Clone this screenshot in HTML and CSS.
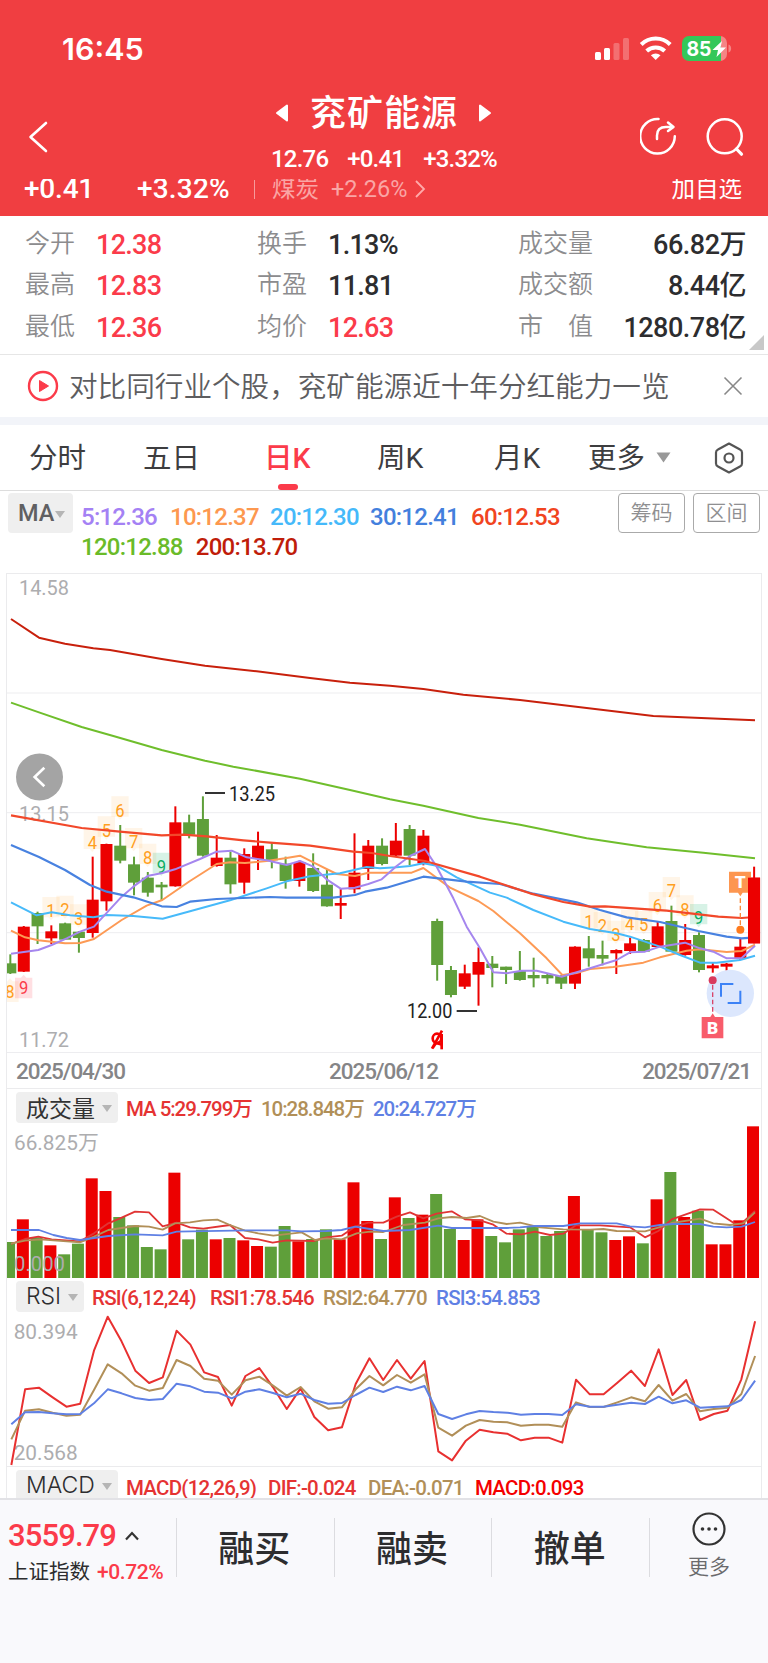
FILE: index.html
```html
<!DOCTYPE html>
<html lang="zh-CN">
<head>
<meta charset="utf-8">
<title>兖矿能源</title>
<link rel="stylesheet" href="styles.css">
</head>
<body>
<header class="header">
  <div class="status">
    <span class="clock">16:45</span>
    <svg class="status-icons" width="140" height="28" viewBox="0 0 140 28">
      <g fill="#fff">
        <rect x="0" y="17" width="6" height="8" rx="1.500"/><rect x="9" y="13" width="6" height="12" rx="1.500"/>
        <g opacity=".25"><rect x="18.500" y="8" width="6" height="17" rx="1.500"/><rect x="28" y="3" width="6" height="22" rx="1.500"/></g>
      </g>
      <g fill="none" stroke="#fff" stroke-width="4"><path d="M46.200 9.500a20.500 20.500 0 0 1 29 0"/><path d="M51.700 16a13 13 0 0 1 18 0"/></g>
      <path d="M60.700 25l-4.800-4.800a7.500 7.500 0 0 1 9.600 0z" fill="#fff"/>
      <path d="M94 1h31a7 7 0 0 1 7 7v11a7 7 0 0 1-7 7H94z" fill="#f58585"/>
      <path d="M94 1h32v25H94a7 7 0 0 1-7-7V8a7 7 0 0 1 7-7z" fill="#34c759"/>
      <path d="M133.500 9.500c3.500 1 3.500 7 0 8z" fill="#f58585"/>
      <text x="91.500" y="21" textLength="25" lengthAdjust="spacingAndGlyphs" class="battery">85</text>
      <path d="M127 6l-9.500 9h5.500l-1.500 7 9.500-9.500h-5.500z" fill="#fff"/>
    </svg>
  </div>
  <div class="nav">
    <svg class="back" width="20" height="32" viewBox="0 0 20 32"><path d="M18 2L2.500 16 18 30" fill="none" stroke="#fff" stroke-width="2.600" stroke-linecap="round" stroke-linejoin="round"/></svg>
    <div class="title">
      <div class="name-row">
        <svg width="14" height="18" viewBox="0 0 14 18"><path d="M12 1.500v15L2 9z" fill="#fff" stroke="#fff" stroke-width="2" stroke-linejoin="round"/></svg>
        <h1>兖矿能源</h1>
        <svg width="14" height="18" viewBox="0 0 14 18"><path d="M2 1.500v15L12 9z" fill="#fff" stroke="#fff" stroke-width="2" stroke-linejoin="round"/></svg>
      </div>
      <div class="mini"><span>12.76</span><span>+0.41</span><span>+3.32%</span></div>
    </div>
    <svg class="tools" width="108" height="42" viewBox="0 0 108 42" fill="none" stroke="#fff" stroke-width="2.500" stroke-linecap="round" stroke-linejoin="round">
      <path d="M18.500 2A17.300 17.300 0 1 0 34.800 19.300"/><path d="M17 22v-3.500c0-6 3.500-8.500 9-8.500h7M28 5.500l5.500 4.500-5.500 4"/>
      <circle cx="84.700" cy="19.300" r="17"/><path d="M96.500 32l5 5.200" stroke-width="3.200"/>
    </svg>
  </div>
  <div class="ticker">
    <div class="ticker-row">
      <span class="t-chg">+0.41</span><span class="t-pct">+3.32%</span><i></i><span class="t-sec">煤炭</span><span class="t-secp">+2.26%</span>
      <svg width="12" height="20" viewBox="0 0 12 20"><path d="M2 2l8 8-8 8" fill="none" stroke="#faa" stroke-width="1.800"/></svg>
      <span class="t-add">加自选</span>
    </div>
  </div>
</header>

<section class="quote">
  <span class="l">今开</span><b class="up">12.38</b><span class="l">换手</span><b>1.13%</b><span class="l">成交量</span><b class="r">66.82万</b>
  <span class="l">最高</span><b class="up">12.83</b><span class="l">市盈</span><b>11.81</b><span class="l">成交额</span><b class="r">8.44亿</b>
  <span class="l">最低</span><b class="up">12.36</b><span class="l">均价</span><b class="up">12.63</b><span class="l">市　值</span><b class="r">1280.78亿</b>
  <svg class="corner" width="15" height="15" viewBox="0 0 15 15"><path d="M15 0v15H0z" fill="#c8c8c8"/></svg>
</section>

<section class="notice">
  <svg width="32" height="32" viewBox="0 0 32 32"><circle cx="16" cy="16" r="14" fill="none" stroke="#fb3b4a" stroke-width="2.400"/><path d="M12.500 10.500v11L21.500 16z" fill="#fb3b4a" stroke="#fb3b4a" stroke-linejoin="round"/></svg>
  <span>对比同行业个股，兖矿能源近十年分红能力一览</span>
  <svg class="close" width="20" height="20" viewBox="0 0 20 20"><path d="M1.500 1.500l17 17M18.500 1.500l-17 17" stroke="#888" stroke-width="1.600"/></svg>
</section>

<nav class="tabs">
  <span>分时</span><span>五日</span><span class="on">日K</span><span>周K</span><span>月K</span><span>更多</span>
  <svg class="tri" width="15" height="11" viewBox="0 0 15 11"><path d="M.5.5h14l-7 10z" fill="#999"/></svg>
  <svg width="30" height="32" viewBox="0 0 30 32" fill="none" stroke="#555" stroke-width="2.200" stroke-linejoin="round"><path d="M15 1.500l11 6q2 1 2 3v11q0 2-2 3l-11 6-11-6q-2-1-2-3v-11q0-2 2-3z"/><circle cx="15" cy="16" r="4.500"/></svg>
</nav>

<section class="ma">
  <div class="pill ma-pill">MA<svg width="10" height="7" viewBox="0 0 10 7"><path d="M0 0h10L5 7z" fill="#b5b5b5"/></svg></div>
  <div class="ma-list">
    <span class="m5">5:12.36</span><span class="m10">10:12.37</span><span class="m20">20:12.30</span><span class="m30">30:12.41</span><span class="m60">60:12.53</span>
    <div class="ma-second"><span class="m120">120:12.88</span><span class="m200">200:13.70</span></div>
  </div>
  <div class="btns"><span>筹码</span><span>区间</span></div>
</section>

<main class="charts">
  <svg id="price" class="chart price" viewBox="21 12 2262 1437"></svg>
  <div class="dates"><span>2025/04/30</span><span>2025/06/12</span><span>2025/07/21</span></div>
  <div class="legend vol-legend">
    <div class="pill vol-pill">成交量<svg width="10" height="7" viewBox="0 0 10 7"><path d="M0 0h10L5 7z" fill="#b5b5b5"/></svg></div>
    <span class="c-red" style="width:135px">MA 5:29.799万</span><span class="c-brown" style="width:112px">10:28.848万</span><span class="c-blue">20:24.727万</span>
  </div>
  <svg id="volume" class="chart volume" viewBox="21 252 2262 462"></svg>
  <div class="legend rsi-legend">
    <div class="pill rsi-pill">RSI<svg width="10" height="7" viewBox="0 0 10 7"><path d="M0 0h10L5 7z" fill="#b5b5b5"/></svg></div>
    <span class="c-red" style="width:118px">RSI(6,12,24)</span><span class="c-red" style="width:113px">RSI1:78.546</span><span class="c-brown" style="width:113px">RSI2:64.770</span><span class="c-blue">RSI3:54.853</span>
  </div>
  <svg id="rsi" class="chart rsi" viewBox="21 99 2262 459"></svg>
  <div class="legend macd-legend">
    <div class="pill macd-pill">MACD<svg width="10" height="7" viewBox="0 0 10 7"><path d="M0 0h10L5 7z" fill="#b5b5b5"/></svg></div>
    <span class="c-red" style="width:142px">MACD(12,26,9)</span><span class="c-red" style="width:100px">DIF:-0.024</span><span class="c-brown" style="width:107px">DEA:-0.071</span><span class="c-bright">MACD:0.093</span>
  </div>
</main>

<footer class="bar">
  <div class="index">
    <div class="index-val">3559.79<svg width="16" height="10" viewBox="0 0 16 10"><path d="M2 8.500l6-6.500 6 6.500" fill="none" stroke="#333" stroke-width="2.200"/></svg></div>
    <div class="index-name">上证指数<em>+0.72%</em></div>
  </div>
  <div class="act">融买</div><div class="act">融卖</div><div class="act">撤单</div>
  <div class="more">
    <svg width="34" height="34" viewBox="0 0 34 34"><circle cx="17" cy="17" r="15.500" fill="none" stroke="#333" stroke-width="2.200"/><g fill="#333"><circle cx="10.500" cy="17" r="1.800"/><circle cx="17" cy="17" r="1.800"/><circle cx="23.500" cy="17" r="1.800"/></g></svg>
    <span>更多</span>
  </div>
</footer>
<script src="script.js"></script>
</body>
</html>
```

FILE: styles.css
```css
* { box-sizing: border-box; }
body { margin: 0; width: 768px; height: 1663px; background: #fff; overflow: hidden; color: #2d2d2f;
  font-family: Roboto, "Noto Sans CJK SC", sans-serif; }
svg { display: block; flex: none; }
span, b, em { white-space: nowrap; }

.header { height: 216px; background: #f03e41; color: #fff; }
.status { height: 88px; display: flex; justify-content: space-between; padding: 35px 33px 0 62px; }
.clock { font: 600 30.500px/28px Inter, sans-serif; letter-spacing: 0; }
.battery { font: 700 20px Inter, sans-serif; fill: #fff; }
.nav { height: 91px; display: flex; align-items: flex-start; padding: 0 20px 0 28px; }
.back { margin-top: 33px; }
.title { flex: 1; padding-left: 80px; display: flex; flex-direction: column; align-items: center; }
.name-row { height: 49px; display: flex; align-items: center; gap: 21px; padding-right: 1px; }
h1 { margin: 0; font-size: 36px; font-weight: 500; line-height: 48px; letter-spacing: 1px; margin-right: -1px; position: relative; top: 1px; }
.mini { display: flex; gap: 19px; font-size: 24px; font-weight: 500; line-height: 28px; letter-spacing: -.8px; margin-top: 8px; }
.tools { margin-top: 29px; }
.ticker { height: 26px; overflow: hidden; }
.ticker-row { display: flex; align-items: center; height: 26px; margin-top: -3px; padding: 0 26px 0 24px; line-height: 26px; }
.t-chg { font-size: 28px; width: 113px; font-weight: 500; letter-spacing: -.2px; }
.t-pct { font-size: 28px; width: 117px; font-weight: 500; letter-spacing: .2px; }
.ticker-row i { width: 1px; height: 19px; background: #f79a9b; margin-right: 17px; }
.t-sec { font-size: 23.500px; width: 59px; color: #faa5a5; font-weight: 400; }
.t-secp { font-size: 23.500px; width: 83px; color: #faa5a5; letter-spacing: 0; }
.t-add { font-size: 23.500px; margin-left: auto; }

.quote { position: relative; height: 139px; border-bottom: 1px solid #e6e6e6; padding: 8px 22px 0 25px; display: grid;
  grid-template-columns: 71px 161px 71px 190px 90px 1fr; grid-template-rows: repeat(3, 41.300px); align-items: center; }
.quote .l { font-size: 25px; line-height: 32px; color: #8c8c8e; font-weight: 350; padding-bottom: 1px; }
.quote b { font-size: 27px; font-weight: 500; line-height: 32px; letter-spacing: -.7px; padding-top: 1px; }
.quote .up { color: #fb3b4a; }
.quote .r { text-align: right; letter-spacing: -.5px; }
.corner { position: absolute; right: 4px; bottom: 4px; }

.notice { height: 70px; border-bottom: 8px solid #f2f4f9; display: flex; align-items: center; padding: 0 25px 0 27px; color: #5d5d5f;
  font-size: 28.600px; font-weight: 350; }
.notice span { margin-left: 10px; line-height: 40px; padding-top: 2px; }
.close { margin-left: auto; margin-top: -1px; }

.tabs { height: 66px; border-bottom: 1px solid #ddd; display: grid; align-items: center; padding-left: 29px; color: #3d3d3f;
  grid-template-columns: 114px 121px 113px 117px 94px 68px 58px 30px; font-size: 28.500px; line-height: 40px; }
.tabs span { padding-top: 2px; }
.on { color: #fb3b4a; font-weight: 500; position: relative; }
.on::after { content: ""; position: absolute; left: 14px; top: 47px; width: 20px; height: 6px; border-radius: 3px; background: #fb3b4a; }

.ma { height: 82px; display: flex; padding: 2px 8px 0; }
.pill { background: #efefef; border-radius: 4px; display: flex; align-items: center; flex: none; }
.ma-pill { width: 65px; height: 40px; padding-left: 10px; font-size: 23.500px; font-weight: 500; color: #606062; gap: 1px; }
.ma-list { width: 500px; margin-left: 8px; padding-top: 9px; display: grid; grid-template-columns: 89px 100px 100px 101px 1fr; grid-auto-rows: 30px;
  font-size: 24px; font-weight: 500; line-height: 31px; letter-spacing: -.75px; align-content: start; }
.ma-second { grid-column: 1 / -1; display: flex; gap: 13px; }
.m5 { color: #a481f4; } .m10 { color: #fd984f; } .m20 { color: #45b9fa; } .m30 { color: #437fdd; }
.m60 { color: #f1441f; } .m120 { color: #6abb29; } .m200 { color: #c01d0a; }
.btns { display: flex; gap: 8px; margin-left: auto; }
.btns span { width: 67px; height: 40px; border: 1.500px solid #aaa; border-radius: 4px; text-align: center; font-size: 21px; line-height: 39px; color: #8f8f91; font-weight: 350; }

.charts { width: 756px; height: 925px; margin-left: 6px; border: 1px solid #ebebed; border-bottom: 0; overflow: hidden; }
.chart { width: 754px; box-sizing: content-box; }
.chart text { font-family: Roboto, "Noto Sans CJK SC", sans-serif; }
.price { height: 479px; }
.volume { height: 154px; }
.rsi { height: 153px; border-bottom: 1px solid #ebebed; }
.dates { height: 36px; border-bottom: 1px solid #ebebed; display: flex; justify-content: space-between; padding: 0 10px 0 9px;
  font-size: 22.500px; font-weight: 500; line-height: 37px; color: #858587; letter-spacing: -1.100px; }
.legend { height: 35px; display: flex; align-items: flex-start; padding: 3px 0 0 9px; font-size: 20.500px; line-height: 34px; font-weight: 500; }
.legend > span { flex: none; }
.vol-legend > span { letter-spacing: -1.050px; }
.rsi-legend > span { letter-spacing: -.75px; }
.macd-legend > span { letter-spacing: -.75px; }
.rsi-legend { height: 35px; }
.macd-legend { height: 32px; line-height: 36px; }
.pill svg { margin-top: 2px; }
.vol-pill, .rsi-pill, .macd-pill { height: 31px; padding-left: 10px; font: 300 23px/31px "Noto Sans CJK SC", sans-serif; gap: 7px; }
.vol-pill { width: 102px; margin-right: 8px; font-weight: 400; color: #333; line-height: 29px; }
.rsi-pill { width: 68px; margin-right: 8px; font-family: Inter, sans-serif; }
.macd-pill { width: 102px; margin-right: 8px; font-family: Inter, sans-serif; }
.c-red { color: #e53333; } .c-brown { color: #b18f58; } .c-blue { color: #5f80e4; } .c-bright { color: #f40000; }

.bar { height: 165px; border-top: 2px solid #e2e2e6; background: #f9f9fc; display: flex; padding-top: 18px; }
.bar > div { height: 59px; }
.index { width: 177px; border-right: 1px solid #dcdce0; padding-left: 8px; }
.index-val { display: flex; align-items: center; height: 36px; gap: 8px; color: #fb3b4a; font-size: 31px; font-weight: 500; line-height: 36px; letter-spacing: -.9px; }
.index-name { font-size: 20.500px; line-height: 30px; margin-top: 3px; letter-spacing: 0; }
.index-name em { font-style: normal; color: #fb3b4a; font-weight: 500; font-size: 21px; margin-left: 7px; letter-spacing: -.4px; }
.act { width: 157.700px; border-right: 1px solid #dcdce0; text-align: center; font-size: 36px; font-weight: 500; line-height: 64px; padding-right: 2px; }
.more { flex: 1; display: flex; flex-direction: column; align-items: center; color: #6a6a6c; font-size: 21px; line-height: 30px; }
.more svg { margin-top: -6px; }
.more span { margin-top: 6px; font-weight: 350; }
```

FILE: script.js
```js
// Chart units are thirds of a CSS pixel.
const RED = '#ec0000', GREEN = '#5f9f3a';
const line = (pts, color, w = 5.5) =>
  `<polyline points="${pts}" fill="none" stroke="${color}" stroke-width="${w}" stroke-linejoin="round"/>`;
const label = (x, y, w, s, color, size) =>
  `<text x="${x}" y="${y}" textLength="${w}" lengthAdjust="spacingAndGlyphs" font-size="${size}" fill="${color}">${s}</text>`;
const rect = (x, y, w, h, f) => `<rect x="${x}" y="${y}" width="${w}" height="${h}" fill="${f}"/>`;

// direction, high, body top, body bottom, low
const candles = `g1153 1180 1210 1212|r1068 1070 1205 1206|g1025 1029 1069 1122|r1066 1084 1105 1122|g1058 1060 1109 1110|g1083 1085 1104 1148
r860 989 1089 1103|r821 822 994 1022|g765 827 872 880|g860 883 938 976|g906 923 968 980|g936 944 952 990|r709 757 949 950|g734 757 794 805
g679 747 857 860|r795 863 888 890|g845 863 943 971|r835 852 938 971|r785 827 867 900|g820 838 871 895|g860 881 933 956|r872 876 933 950
g850 894 963 966|g897 944 1009 1010|r955 999 1007 1047|r790 908 958 970|r810 827 897 930|g805 827 882 886|r759 812 857 860|g765 777 857 886
r780 797 880 886|g1046 1053 1185 1232|g1188 1200 1275 1282|r1184 1210 1250 1257|r1132 1176 1214 1307|g1158 1181 1194 1252|g1190 1190 1200 1242
g1143 1203 1230 1232|g1163 1215 1225 1252|g1212 1215 1225 1242|g1215 1218 1241 1257|r1129 1130 1241 1257|g1098 1135 1165 1190|g1112 1155 1166 1186
r1138 1140 1150 1212|r1103 1120 1143 1152|g1107 1110 1145 1146|r1055 1069 1131 1132|g1007 1053 1145 1146|r1062 1110 1155 1157|g1087 1095 1200 1207
r1178 1186 1195 1208|r1179 1181 1190 1212|r1105 1130 1167 1170|r890 923 1120 1120`.split(/[|\n]/);

let p = '';
for (const y of [369, 728, 1088, 1447.5]) p += rect(21, y - 1.5, 2262, 3, '#ededf0');
p += label(57, 75, 150, '14.58', '#adadaf', 62) + label(57, 753, 150, '13.15', '#adadaf', 62) + label(57, 1432, 150, '11.72', '#adadaf', 62);
candles.forEach((c, i) => {
  const [hi, top, bot, lo] = c.slice(1).split(' ').map(Number), x = 30 + 41.34 * i + (i ? 0 : 1), f = c[0] === 'r' ? RED : GREEN;
  p += rect(x - 3, hi, 6, lo - hi, f) + rect(x - 18, top, 36, bot - top, f);
});

// sequence counters: x, digit centre, digit, kind
const marks = [[30,1263,8,'u'],[71,1252,9,'p'],[153,1022,1],[195,1018,2],[236,1044,3],[277,817,4],[319,780,5],[360,720,6],[401,815,7],[443,862,8],[484,889,9,'g'],
  [1767,1053,1],[1807,1067,2],[1848,1093,3],[1889,1060,4],[1931,1064,5],[1972,1007,6],[2014,962,7],[2055,1017,8],[2096,1043,9,'g']];
for (const [x, y, n, k] of marks) {
  const below = k === 'u' || k === 'p';
  const bg = k === 'p' ? '#ff3b4a29' : k === 'g' ? '#10b06b2b' : '#ffa0321c';
  const fg = k === 'p' ? '#fb3b4a' : k === 'g' ? '#0cae64' : '#ff9f1e';
  p += below
    ? `<path d="M${x - 26} ${y - 29}h18l8-9 8 9h18v62h-52z" fill="${bg}"/>`
    : `<path d="M${x - 26} ${y - 41}h52v61h-18l-8 9-8-9h-18z" fill="${bg}"/>`;
  p += label(x - 14, y + 20, 28, n, fg, 57);
}

p += line('33,147 117,203 195,221 280,235 330,240 485,267 615,287 770,304 930,324 1050,338 1170,347 1270,357 1390,374 1560,390 1760,414 1960,438 2265,451', '#c8200c', 6);
p += line('33,398 117,427 245,471 340,498 485,540 615,572 700,590 900,626 1050,660 1170,688 1270,707 1435,744 1560,764 1760,805 1940,832 2110,848 2265,865', '#6fbe2c', 6);
p += line('33,1082 75,1102 115,1111 195,1120 240,1119 282,1107 365,1050 440,1007 487,990 570,933 650,882 690,877 735,879 800,873 855,865 900,857 940,877 1010,912 1065,918 1105,908 1235,908 1270,894 1350,953 1435,993 1480,1023 1560,1090 1640,1165 1687,1215 1730,1209 1770,1197 1840,1191 1930,1178 1980,1162 2060,1142 2100,1138 2180,1146 2225,1143 2265,1124', '#fd9a55', 6);
p += line('33,997 110,1036 155,1027 210,1036 280,1042 320,1035 400,1038 488,1046 570,1024 690,991 800,955 860,934 930,919 1020,910 1100,891 1140,895 1190,892 1230,888 1270,880 1310,887 1370,922 1470,968 1520,983 1600,1020 1690,1055 1770,1077 1850,1090 1890,1100 1980,1130 2040,1155 2100,1178 2150,1178 2220,1170 2265,1157', '#47bafa', 6);
p += line('33,1151 115,1140 155,1125 200,1105 240,1085 282,1070 365,980 400,950 445,917 487,909 525,898 600,867 650,845 695,842 740,862 800,871 860,885 900,873 940,890 980,928 1022,956 1065,953 1105,942 1145,928 1190,888 1230,858 1275,837 1310,890 1360,985 1400,1070 1440,1135 1480,1207 1520,1210 1565,1202 1610,1202 1685,1220 1770,1195 1850,1170 1890,1147 1935,1145 1980,1130 2055,1118 2100,1135 2140,1145 2180,1165 2225,1164 2265,1127', '#a586ee', 6);
p += line('33,825 117,861 195,900 270,945 320,965 400,982 485,1009 530,1011 570,995 650,987 810,981 860,983 1000,983 1065,975 1095,965 1160,953 1270,920 1400,935 1500,942 1600,971 1730,997 1800,1020 1880,1042 1980,1056 2095,1083 2180,1100 2225,1105 2265,1102', '#4882e0', 6.5);
p += line('33,736 245,774 360,785 485,796 550,794 620,799 730,811 810,818 930,827 1060,845 1115,849 1170,858 1275,873 1440,920 1590,970 1690,996 1770,1010 1815,1009 2000,1022 2155,1040 2225,1044 2265,1041', '#f2482a', 6.5);

p += rect(615, 666, 60, 6, '#333') + label(687, 693, 138, '13.25', '#222', 60);
p += rect(1370, 1320, 61, 6, '#333') + label(1221, 1345, 136, '12.00', '#222', 60);
// ex-dividend mark
p += `<g fill="none" stroke="#f40000" stroke-width="8"><path d="M1325 1438v-46"/><ellipse cx="1311" cy="1405" rx="13" ry="14"/><path d="M1296 1436l30-54M1298 1434l10-15 16 4"/></g>`;
p += `<circle cx="118.500" cy="621" r="70.500" fill="#a4a4a4"/><path d="M133 593l-29 28 29 28" fill="none" stroke="#fff" stroke-width="8"/>`;
p += `<circle cx="2191" cy="1270" r="71" fill="#dce7fd"/><path d="M2163 1280v-38h37M2183 1299h38v-37" fill="none" stroke="#3c82f6" stroke-width="6"/>`;
p += `<path d="M2221 985v80" stroke="#fb8a3a" stroke-width="4" stroke-dasharray="14 8"/><circle cx="2221" cy="1079" r="12" fill="#ff7a1c"/>
<path d="M2187 905h66v63h-25l-7 11-7-11h-27z" fill="#fd9650"/><text x="2221" y="955" text-anchor="middle" font-size="52" font-weight="900" fill="#fff">T</text>
<path d="M2138 1245v86" stroke="#d9456a" stroke-width="4" stroke-dasharray="14 8"/><circle cx="2138" cy="1231" r="12" fill="#d93a5c"/>
<path d="M2105 1341h26l7-11 7 11h25v64h-65z" fill="#f85c6b"/><text x="2138" y="1391" text-anchor="middle" font-size="52" font-weight="900" fill="#fff">B</text>`;
// the newest candle stays above the trade flag
p += rect(2244, 923, 36, 197, RED);
document.getElementById('price').innerHTML = p;

const vols = 'g606 r538 g592 r616 g643 g611 r415 r453 g531 g556 g621 g628 r398 g598 g569 r598 g594 r601 r618 g620 g558 r604 g597 g568 r598 r427 r543 g597 r472 g534 r524 g462 g567 r600 r538 g588 g607 g568 g561 g588 g573 r468 g570 g577 r600 r589 g610 r478 g396 r531 g512 r613 r613 r541 r259'.split(' ');
let v = '';
vols.forEach((s, i) => { const t = +s.slice(1); v += rect(27.2 + 41.33 * i - 18, t, 36, 714 - t, s[0] === 'r' ? RED : GREEN); });
v += line('33,612 75,597 115,590 155,598 240,604 282,580 325,550 365,533 405,515 447,517 488,559 530,548 570,562 610,566 690,555 735,594 775,598 818,608 860,601 940,603 980,592 1025,587 1065,560 1105,548 1150,548 1190,530 1230,517 1270,535 1310,521 1355,514 1395,538 1440,541 1480,554 1520,581 1565,583 1605,575 1650,585 1690,581 1728,556 1800,556 1890,562 1935,592 1975,573 2015,538 2100,508 2140,509 2205,551 2225,550 2265,513', '#e03434');
v += line('33,611 75,602 120,598 240,607 282,590 325,570 405,558 447,560 488,569 525,550 570,547 610,541 652,539 690,555 735,572 775,580 820,587 905,577 945,600 980,595 1025,598 1070,580 1110,575 1150,576 1210,555 1275,548 1315,535 1355,531 1400,534 1440,528 1480,545 1520,552 1560,548 1620,562 1690,568 1770,569 1810,567 1850,573 1935,574 1975,563 2015,549 2100,536 2140,550 2190,555 2230,550 2265,517', '#b18f58');
v += line('33,570 117,570 160,585 200,594 240,600 325,588 405,583 488,586 530,575 740,571 860,571 905,574 980,573 1025,570 1065,560 1110,567 1150,573 1230,570 1315,557 1355,564 1520,564 1560,562 1605,558 1690,558 1740,550 1850,550 1890,559 1935,562 1980,555 2020,552 2100,552 2140,560 2180,562 2225,560 2265,546', '#5f80e4');
v += label(42, 330, 254, '66.825万', '#adadaf', 62) + label(42, 692, 153, '0.000', '#adadaf', 62);
document.getElementById('volume').innerHTML = v;

const series = (s, color) => line(s.split(',').map((y, i) => (34 + 41.32 * i).toFixed(1) + ',' + y).join(' '), color, 6);
document.getElementById('rsi').innerHTML =
  label(41, 176, 192, '80.394', '#adadaf', 62) + label(41, 540, 192, '20.568', '#adadaf', 62) +
  series('555,328,323,352,380,371,212,110,184,272,309,292,152,194,277,291,377,288,264,322,387,325,411,451,442,312,235,300,240,296,243,514,541,482,449,457,461,481,473,473,488,299,343,343,308,272,318,208,345,300,420,402,392,298,124', '#e83030') +
  series('478,392,388,398,407,404,330,253,280,317,332,324,240,258,296,302,344,301,290,317,347,321,364,386,382,328,288,316,285,308,283,443,467,437,420,425,427,437,434,434,440,367,381,381,367,352,364,315,362,342,394,387,383,342,228', '#b18f58') +
  series('433,397,396,400,403,402,370,328,340,354,360,357,311,319,335,338,355,335,328,339,352,341,360,371,369,345,323,336,320,331,318,402,417,403,393,396,398,404,402,402,405,373,380,380,374,368,372,350,370,361,383,381,379,360,302', '#5f80e4');
```
